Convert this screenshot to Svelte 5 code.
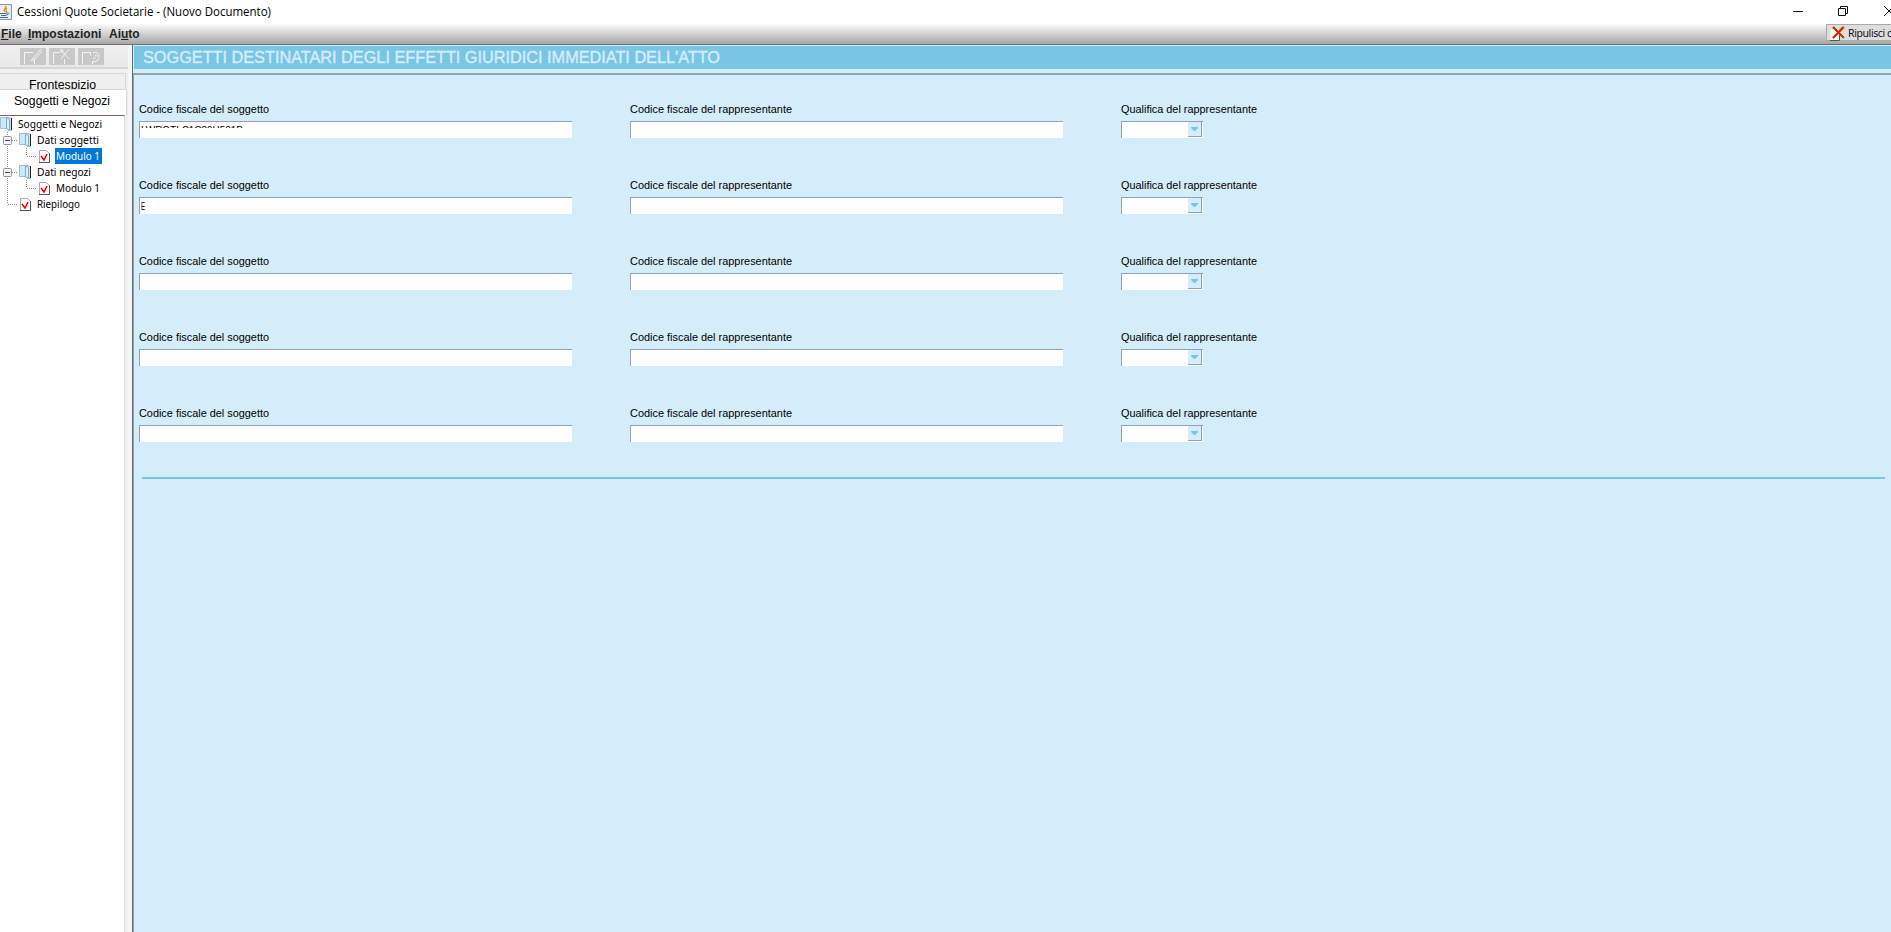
<script lang="ts">
  const rows = [
    { code: "LWRGTLC1C89H501B", width: 102, cut: true },
    { code: "E", width: 4, cut: false },
    { code: "", width: 0, cut: false },
    { code: "", width: 0, cut: false },
    { code: "", width: 0, cut: false },
  ];
  const tools = ["edit", "remove", "restore"];
  const tree = [
    { label: "Soggetti e Negozi", kind: "folder", level: 0, width: 84 },
    { label: "Dati soggetti", kind: "folder", level: 1, width: 62 },
    { label: "Modulo 1", kind: "page", level: 2, width: 44, selected: true },
    { label: "Dati negozi", kind: "folder", level: 1, width: 54 },
    { label: "Modulo 1", kind: "page", level: 2, width: 44, last: true },
    { label: "Riepilogo", kind: "page", level: 1, width: 43, last: true },
  ];
</script>

{#snippet txt(label: string, width: number, cls: string)}
  <svg class="txt {cls}" width={width} height="16"><text x="0" y="12" textLength={width} lengthAdjust="spacingAndGlyphs">{label}</text></svg>
{/snippet}

<div class="window">
  <header class="titlebar">
    <svg class="java" width="12" height="16" viewBox="0 0 12 16">
      <path d="M0 .5h11.5v15H0" fill="#e9edf0" stroke="#8299aa" />
      <path d="M5 2c3 2-3 3 0 6M7 4c-3 2 1 2-1 4" fill="none" stroke="#ef8a28" stroke-width="1.3" />
      <path d="M0 9.500h6M1 11.500h5M0 13.500h8M6 9c4-1 3 2 0 2" fill="none" stroke="#426d91" />
    </svg>
    {@render txt("Cessioni Quote Societarie - (Nuovo Documento)", 254, "title")}
    <div class="controls">
      <svg width="98" height="22" viewBox="0 0 98 22" fill="none" stroke="#111">
        <path d="M0 10.5h10M45.500 7.500h7v7h-7zM47.500 7.500v-2h7v7h-2M91 5l10 10M101 5L91 15" />
      </svg>
    </div>
  </header>

  <nav class="menubar">
    <div class="menus">
      <span class="menu"><u>F</u>ile</span>
      <span class="menu"><u>I</u>mpostazioni</span>
      <span class="menu">Ai<u>u</u>to</span>
    </div>
    <button class="clear" type="button">
      <svg width="18" height="16" viewBox="0 0 18 16">
        <path d="M2.500 4.500h9v11h-9z" fill="#fff" />
        <path d="M11.500 6v9.500H2" fill="none" stroke="#555" />
        <path d="M5 2l11 11M16 2L5 13" fill="none" stroke="#8a6a10" stroke-width="2.200" />
        <path d="M5 2l10 10M15 2L5 13" fill="none" stroke="#f31800" stroke-width="1.600" />
      </svg>
      <span>Ripulisci c</span>
    </button>
  </nav>

  <div class="body">
    <aside class="sidebar">
      <div class="toolbar">
        {#each tools as tool}
          <svg class="tool" width="26" height="17" viewBox="0 0 26 17" fill="none" stroke="#f5f5f5">
            <rect width="26" height="17" fill="#c8c8c8" stroke="none" />
            {#if tool === "edit"}
              <path d="M4.500 16V4.500h9M14.500 12v4" />
              <path d="M21 1l-7 8M22 3l-7 8M14 9l-3 4 4-2" />
            {:else if tool === "remove"}
              <path d="M4.500 16V4.500h6l3-3v3M15.500 11v5" />
              <path d="M11 1l9 10M20 1l-8 10" />
            {:else}
              <path d="M4.500 16V4.500h8v3M14.500 13v3" />
              <path d="M15 5c5-3 8 4 4 8l-4 1M15 11l3-2M19 8l-2-1" />
            {/if}
          </svg>
        {/each}
      </div>
      <div class="tabs">
        <div class="tab">{@render txt("Frontespizio", 67, "tab-text")}</div>
        <div class="tab active">{@render txt("Soggetti e Negozi", 96, "tab-text")}</div>
      </div>
      <div class="tree">
        {#each tree as node}
          <div class="node">
            {#if node.level === 1}
              <svg width="19" height="16" viewBox="0 0 19 16" fill="none">
                <path d={node.last ? "M7.500 0v8M8 8.500h10" : "M7.500 0v16M8 8.500h10"} stroke="#888" stroke-dasharray="1 1" />
                {#if node.kind === "folder"}
                  <rect x="3.500" y="4.500" width="8" height="8" rx="1" fill="#f4f4f4" stroke="#919191" />
                  <path d="M5 8.500h5" stroke="#3347a8" />
                {/if}
              </svg>
            {:else if node.level === 2}
              <svg width="38" height="16" viewBox="0 0 38 16" fill="none">
                <path d="M7.500 0v16M26.500 0v8M27 8.500h10" stroke="#888" stroke-dasharray="1 1" />
              </svg>
            {/if}
            {#if node.kind === "folder"}
              <svg class="icon" width="13" height="16" viewBox="0 0 13 16">
                <path d="M.5 1.500h9l2 1v12h-3l-1-2h-7z" fill="#cce9f8" stroke="#9cc0d0" />
                <path d="M6.500 1.500l3 2v11l-3-2z" fill="#d9f2ff" stroke="#7eaabd" />
                <path d="M11.500 2v12" stroke="#222" />
              </svg>
            {:else}
              <svg class="icon" width="13" height="16" viewBox="0 0 13 16">
                <path d="M1.500 2.500h7l3 3v9h-10z" fill="#fff" stroke="#aaa" />
                <path d="M11.500 5v9.500H1" fill="none" stroke="#555" />
                <path d="M3 8l3 4 3-6" fill="none" stroke="#f00000" stroke-width="1.500" />
              </svg>
            {/if}
            <span class="node-label" class:selected={node.selected}>{@render txt(node.label, node.width, "node-text")}</span>
          </div>
        {/each}
      </div>
    </aside>
    <div class="divider"></div>
    <main class="content">
      <div class="heading">{@render txt("SOGGETTI DESTINATARI DEGLI EFFETTI GIURIDICI IMMEDIATI DELL'ATTO", 577, "heading-text")}</div>
      <div class="form">
        {#each rows as row}
          <div class="row">
            <div class="field">
              {@render txt("Codice fiscale del soggetto", 130, "label")}
              <div class="input">
                {#if row.code}
                  <div class="value" class:cut={row.cut}>{@render txt(row.code, row.width, "code")}</div>
                {/if}
              </div>
            </div>
            <div class="field">
              {@render txt("Codice fiscale del rappresentante", 162, "label")}
              <div class="input"></div>
            </div>
            <div class="field">
              {@render txt("Qualifica del rappresentante", 136, "label")}
              <div class="select">
                <div class="arrow"><svg width="8" height="5" viewBox="0 0 8 5"><path d="M0 0h7v1L4 4H3L0 1z" fill="#78c6e4" /></svg></div>
              </div>
            </div>
          </div>
        {/each}
        <div class="rule"></div>
      </div>
    </main>
  </div>
</div>

<style>
  :global(body) {
    overflow: hidden;
  }

  .window {
    width: 1891px;
    height: 932px;
    display: flex;
    flex-direction: column;
    overflow: hidden;
    background: #fff;
    font-family: "Liberation Sans", Arial, sans-serif;
    font-size: 11px;
    color: #000;
  }

  .window * {
    box-sizing: border-box;
  }

  svg {
    display: block;
    flex: none;
  }

  .txt {
    overflow: visible;
    fill: currentColor;
  }

  .titlebar {
    height: 23px;
    flex: none;
    display: flex;
    align-items: center;
    gap: 5px;
  }

  .title {
    font-family: "Open Sans", sans-serif;
    font-size: 12px;
  }

  .controls {
    margin-left: auto;
  }

  .menubar {
    height: 22px;
    flex: none;
    display: flex;
    justify-content: space-between;
    background: linear-gradient(#fff, #a6a6a6);
    border-bottom: 1px solid #6e6e6e;
  }

  .menus {
    display: flex;
    gap: 8px;
    padding: 4px 0 0 1px;
    font-size: 12px;
    line-height: 15px;
    font-weight: bold;
    color: #222;
  }

  .menu:first-child {
    width: 19px;
  }

  .menu:nth-child(2) {
    width: 73px;
  }

  .clear {
    width: 65px;
    height: 17px;
    margin-top: 1px;
    padding: 0 0 0 1px;
    display: flex;
    align-items: center;
    gap: 2px;
    border: 1px solid #aaa;
    border-right: 0;
    background: #dedede;
    white-space: nowrap;
    font-family: "Noto Sans", sans-serif;
    font-size: 10.5px;
    letter-spacing: -0.4px;
    line-height: 14px;
    color: #111;
  }

  .body {
    flex: 1;
    display: flex;
    min-height: 0;
  }

  .sidebar {
    width: 128px;
    display: flex;
    flex-direction: column;
    background: #f0f0f0;
  }

  .toolbar {
    height: 24px;
    flex: none;
    display: flex;
    gap: 3px;
    padding: 3px 0 0 20px;
    background: linear-gradient(#f0f0f0, #e8e8e8);
    border-bottom: 2px solid #d6d6d6;
  }

  .tabs {
    height: 46px;
    flex: none;
    padding-top: 4px;
  }

  .tab {
    width: 126px;
    height: 16px;
    display: flex;
    justify-content: center;
    padding-top: 3px;
    padding-right: 1px;
    overflow: hidden;
    border: 1px solid #d9d9d9;
    border-left: 0;
    border-bottom: 0;
  }

  .tab.active {
    width: 127px;
    height: 26px;
    padding-right: 3px;
    background: #fff;
  }

  .tab-text {
    font-size: 12px;
  }

  .tree {
    width: 125px;
    flex: 1;
    background: #fff;
    border-top: 1px solid #696969;
    border-right: 1px solid #dcdcdc;
  }

  .node {
    height: 16px;
    display: flex;
    align-items: center;
  }

  .icon {
    margin-right: 4px;
  }

  .node-label {
    padding: 0 2px 0 1px;
    height: 16px;
  }

  .node-label.selected {
    background: #0078d7;
    color: #fff;
  }

  .node-text {
    font-family: "Noto Sans", sans-serif;
    font-size: 11px;
  }

  .divider {
    width: 5px;
    background: #f5f5f5;
    border-right: 1px solid #696969;
  }

  .content {
    flex: 1;
    background: #d4edfa;
    display: flex;
    flex-direction: column;
  }

  .heading {
    height: 23px;
    flex: none;
    margin: 1px 0 4px 1px;
    padding: 5px 0 0 9px;
    background: #78c6e4;
    color: #d4edfa;
  }

  .heading-text {
    font-size: 16px;
    stroke: currentColor;
    stroke-width: 0.4px;
  }

  .form {
    flex: 1;
    border-top: 2px solid #90a4b4;
    border-left: 1px solid #90a4b4;
    padding: 26px 6px 0 5px;
  }

  .row {
    height: 76px;
    display: flex;
    gap: 58px;
  }

  .field {
    width: 433px;
  }

  .label {
    font-size: 11px;
    margin-bottom: 4px;
  }

  .input,
  .select {
    height: 17px;
    background: #fff;
    border-top: 1px solid #90a4b4;
    border-left: 1px solid #90a4b4;
  }

  .value {
    height: 16px;
    width: 110px;
    padding-left: 1px;
  }

  .value.cut {
    height: 6px;
    overflow: hidden;
  }

  .code {
    font-size: 11px;
  }

  .select {
    width: 82px;
    display: flex;
    justify-content: flex-end;
    padding-right: 1px;
  }

  .arrow {
    width: 14px;
    height: 15px;
    padding: 5px 0 0 3px;
    background: #d4edfa;
    border-right: 1px solid #90a4b4;
    border-bottom: 1px solid #90a4b4;
  }

  .rule {
    height: 2px;
    margin: -4px 0 0 3px;
    background: #78c6e4;
  }
</style>
